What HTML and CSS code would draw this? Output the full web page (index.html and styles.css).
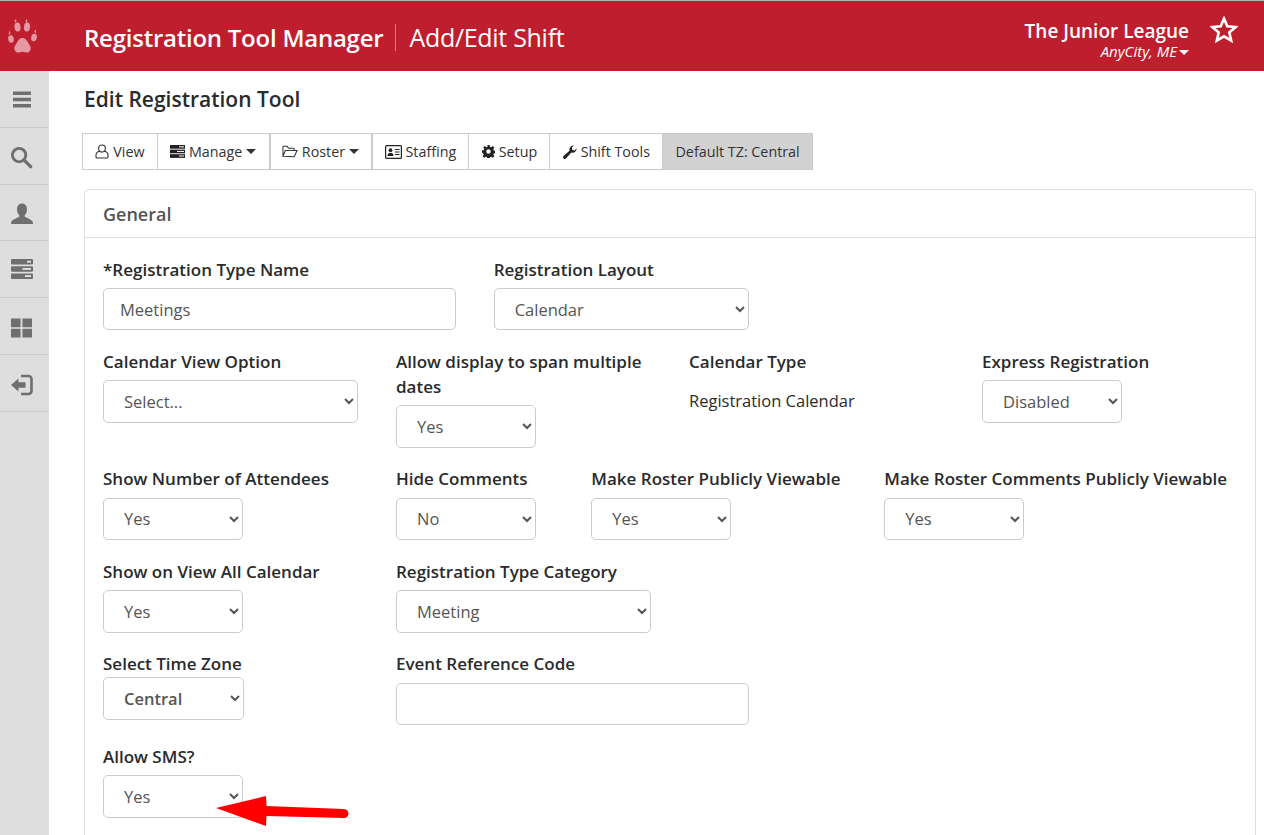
FILE: index.html
```html
<!DOCTYPE html>
<html lang="en">
<head>
<meta charset="utf-8">
<title>Add/Edit Shift</title>
<link rel="stylesheet" href="styles.css">
</head>
<body>
<header class="topbar">
  <div class="logo-cell">
    <svg class="paw" viewBox="0 0 30 36" width="30" height="36"><g fill="#e59aa3"><ellipse cx="3" cy="20" rx="2.800" ry="3.800" transform="rotate(-12 3 20)"/><ellipse cx="1.500" cy="14" rx=".8" ry="1.800"/><ellipse cx="9.500" cy="8" rx="3" ry="4.600" transform="rotate(-5 9.500 8)"/><ellipse cx="7.500" cy="2" rx=".8" ry="1.800"/><ellipse cx="19" cy="8" rx="3" ry="4.600" transform="rotate(5 19 8)"/><ellipse cx="18.500" cy="2" rx=".8" ry="1.800"/><ellipse cx="26" cy="18.500" rx="2.800" ry="3.800" transform="rotate(12 26 18.500)"/><ellipse cx="27.300" cy="12.500" rx=".8" ry="1.800"/><path d="M14.500 19c3 0 4.300 2.500 5.800 5 1.800 2.800 3 4.300 2.200 6.700-.8 2.400-3.200 3.200-5 2.700-1.200-.3-2-.7-3-.7s-1.800.4-3 .7c-1.800.5-4.200-.3-5-2.700-.8-2.400.4-3.900 2.200-6.700 1.500-2.500 2.800-5 5.800-5z"/></g></svg>
  </div>
  <div class="titles">
    <span class="app-title">Registration Tool Manager</span>
    <span class="page-title">Add/Edit Shift</span>
  </div>
  <div class="org">
    <div class="org-name">The Junior League</div>
    <div class="org-city">AnyCity, ME<span class="caret caret-white"></span></div>
  </div>
  <svg class="star" viewBox="0 0 28 27" width="28" height="27"><path d="M14 2.600l3.300 7.700 8.300.7-6.300 5.500 1.900 8.100-7.200-4.300-7.200 4.300 1.900-8.100-6.300-5.500 8.300-.7z" fill="none" stroke="#fff" stroke-width="2.600" stroke-linejoin="miter"/></svg>
</header>
<div class="shell">
  <nav class="sidebar">
    <a class="side-item side-top"><svg viewBox="0 0 20 18" width="20" height="19"><path fill="#6f6f6f" d="M1 1h18v3.500H1zM1 7.200h18v3.500H1zM1 13.500h18V17H1z"/></svg></a>
    <a class="side-item"><svg viewBox="0 0 24 24" width="23" height="23"><circle cx="9.500" cy="9.500" r="7" fill="none" stroke="#6f6f6f" stroke-width="3"/><path d="M14.500 14.500l7 7" stroke="#6f6f6f" stroke-width="3.600" stroke-linecap="round"/></svg></a>
    <a class="side-item"><svg viewBox="0 0 24 24" width="24" height="24"><path fill="#6f6f6f" d="M12 1.500c3.200 0 5 2.500 5 5.700 0 2.300-.8 4.300-2 5.700-.6.700-.4 1.800.4 2.200 1.800.9 5.100 2.500 6.600 3.600.6.500.9 1.600 1 3.300H1c.1-1.700.4-2.800 1-3.300 1.500-1.100 4.800-2.700 6.600-3.600.8-.4 1-1.500.4-2.200-1.200-1.400-2-3.400-2-5.700 0-3.200 1.800-5.700 5-5.700z"/></svg></a>
    <a class="side-item side-mid"><svg viewBox="0 0 24 22" width="24" height="22"><g fill="#6f6f6f"><rect x="1" y="1" width="22" height="5.500" rx="1.200"/><rect x="1" y="8.200" width="22" height="5.500" rx="1.200"/><rect x="1" y="15.400" width="22" height="5.500" rx="1.200"/></g><g fill="#e4e4e4"><rect x="17" y="2.800" width="4" height="1.800"/><rect x="12.500" y="10" width="8.500" height="1.800"/><rect x="15" y="17.200" width="6" height="1.800"/></g></svg></a>
    <a class="side-item"><svg viewBox="0 0 22 20" width="21" height="20"><path fill="#6f6f6f" d="M0 0h10v9.200H0zM12 0h10v9.200H12zM0 10.800h10V20H0zM12 10.800h10V20H12z"/></svg></a>
    <a class="side-item"><svg viewBox="0 0 24 22" width="24" height="22"><path fill="#6f6f6f" d="M1 11l7.500-6.500v3.700h7v5.600h-7v3.700z"/><path fill="none" stroke="#6f6f6f" stroke-width="2.600" d="M11 2h7.500a3 3 0 0 1 3 3v12a3 3 0 0 1-3 3H11"/></svg></a>
  </nav>
  <main class="content">
    <h1 class="page-heading">Edit Registration Tool</h1>
    <div class="toolbar">
      <a class="tool"><svg class="ti" viewBox="0 0 14 15" width="14" height="15"><path fill="none" stroke="#333" stroke-width="1.100" d="M7 1c2 0 3.400 1.500 3.400 3.500S9 8 7 8 3.600 6.500 3.600 4.500 5 1 7 1zM4.600 7.300C2.500 7.600 1 8.800 1 11.300V13c0 .6.500 1 1 1h10c.5 0 1-.4 1-1v-1.700c0-2.500-1.500-3.700-3.600-4"/></svg>View</a>
      <a class="tool"><svg class="ti" viewBox="0 0 15 13" width="15" height="13"><rect y="0" width="15" height="3.700" fill="#222"/><rect y="4.600" width="15" height="3.700" fill="#222"/><rect y="9.200" width="15" height="3.700" fill="#222"/><rect x="9" y="1.300" width="5" height="1" fill="#fff"/><rect x="7" y="5.900" width="7" height="1" fill="#fff"/><rect x="9" y="10.500" width="5" height="1" fill="#fff"/></svg>Manage<span class="caret"></span></a>
      <a class="tool tool-thick"><svg class="ti" viewBox="0 0 17 13" width="16" height="13"><path fill="none" stroke="#333" stroke-width="1.100" d="M1 11.500V2c0-.5.400-1 1-1h3.500l1.500 2h5c.5 0 1 .4 1 1v1.500M1 11.500 3.500 5.500H16l-3 6.500z"/></svg>Roster<span class="caret"></span></a>
      <a class="tool tool-thick"><svg class="ti" viewBox="0 0 17 14" width="17" height="14"><rect x=".6" y=".6" width="15.800" height="12.800" rx="1" fill="none" stroke="#222" stroke-width="1.200"/><circle cx="5.500" cy="5.200" r="1.900" fill="#222"/><path fill="#222" d="M2.500 11c0-2 1.300-3.200 3-3.200s3 1.200 3 3.200z"/><path stroke="#222" d="M10 4.500h4.500M10 7h4.500M10 9.500h4.500"/></svg>Staffing</a>
      <a class="tool"><svg class="ti" viewBox="0 0 14 14" width="13" height="13"><path fill="#222" fill-rule="evenodd" d="M5.800 0h2.400l.4 2 1.300.5L11.600 1.400l1.700 1.700-1.100 1.700.5 1.300 1.900.4v2.400l-1.900.4-.5 1.300 1.100 1.700-1.700 1.700-1.700-1.100-1.300.5-.4 1.800H5.800l-.4-1.800-1.300-.5-1.700 1.100-1.700-1.700 1.100-1.700-.5-1.300L0 8.400V6l1.900-.4.500-1.300-1.100-1.700L3 1.400l1.700 1.100L6 2zM7 4.800a2.400 2.400 0 1 0 0 4.800 2.400 2.400 0 0 0 0-4.800z" transform="translate(0 -.2)"/></svg>Setup</a>
      <a class="tool"><svg class="ti" viewBox="0 0 15 15" width="14" height="14"><path fill="#222" d="M14.500 3.500c.3 2.200-1.200 4.500-3.700 4.700-.7.100-1.300 0-1.900-.2l-5.500 6.200c-.8.900-2 1-2.800.2s-.7-2 .2-2.800l6.200-5.500c-.2-.6-.3-1.200-.2-1.900C7.300 1.700 9.500.2 11.700.5L9.500 2.700l.5 2.600 2.600.5z"/></svg>Shift Tools</a>
      <span class="tool tool-tz">Default TZ: Central</span>
    </div>
    <section class="card">
      <h2 class="card-header">General</h2>
      <div class="card-body">
        <div class="row">
          <div class="field span-4"><label class="lbl">*Registration Type Name</label><input class="ctl ctl-input" type="text" value="Meetings"></div>
          <div class="field span-4"><label class="lbl">Registration Layout</label><select class="ctl sel-wide"><option>Calendar</option></select></div>
        </div>
        <div class="row">
          <div class="field span-3"><label class="lbl">Calendar View Option</label><select class="ctl sel-wide"><option>Select...</option></select></div>
          <div class="field span-3"><label class="lbl">Allow display to span multiple dates</label><select class="ctl sel-small"><option>Yes</option></select></div>
          <div class="field span-3"><label class="lbl">Calendar Type</label><div class="static">Registration Calendar</div></div>
          <div class="field span-3"><label class="lbl">Express Registration</label><select class="ctl sel-small"><option>Disabled</option></select></div>
        </div>
        <div class="row">
          <div class="field span-3"><label class="lbl">Show Number of Attendees</label><select class="ctl sel-small"><option>Yes</option></select></div>
          <div class="field span-2"><label class="lbl">Hide Comments</label><select class="ctl sel-small"><option>No</option></select></div>
          <div class="field span-3"><label class="lbl">Make Roster Publicly Viewable</label><select class="ctl sel-small"><option>Yes</option></select></div>
          <div class="field span-4"><label class="lbl">Make Roster Comments Publicly Viewable</label><select class="ctl sel-small"><option>Yes</option></select></div>
        </div>
        <div class="row">
          <div class="field span-3"><label class="lbl">Show on View All Calendar</label><select class="ctl sel-small"><option>Yes</option></select></div>
          <div class="field span-4"><label class="lbl">Registration Type Category</label><select class="ctl sel-wide"><option>Meeting</option></select></div>
        </div>
        <div class="row">
          <div class="field span-3"><label class="lbl lbl-tight">Select Time Zone</label><select class="ctl sel-small sel-strong"><option>Central</option></select></div>
          <div class="field span-4"><label class="lbl">Event Reference Code</label><input class="ctl ctl-input" type="text"></div>
        </div>
        <div class="row">
          <div class="field span-3"><label class="lbl">Allow SMS?</label><select class="ctl sel-small"><option>Yes</option></select></div>
        </div>
      </div>
    </section>
  </main>
</div>
<svg class="callout" viewBox="0 0 136 34" width="136" height="34"><path fill="#f00" d="M0 13 50 1l.5 10 77 3c3.500.2 5 2.300 5 4.500s-1.500 4.600-5 4.500l-77-2-.5 10z"/></svg>
</body>
</html>
```
FILE: styles.css
```css
* { box-sizing: border-box; }
html, body { margin: 0; height: 835px; overflow: hidden; }
body {
  position: relative;
  font-family: "Open Sans", "Noto Sans", sans-serif;
  font-size: 16px;
  color: #292b2c;
  background: #fff;
}
.topbar {
  height: 71px;
  padding-top: 2px;
  background: #be1e2d;
  border-top: 1px solid #b5b5b5;
  display: flex;
  align-items: center;
  color: #fff;
}
.logo-cell { width: 84px; padding-left: 8px; display: flex; align-items: center; }
.titles { flex: 1; display: flex; align-items: center; }
.app-title { font-size: 24px; font-weight: 600; letter-spacing: -0.24px; padding-right: 12px; border-right: 1px solid #d9808a; line-height: 27px; }
.page-title { font-size: 25px; font-weight: 400; letter-spacing: -0.3px; padding-left: 13px; }
.org { text-align: right; padding: 6px 21px 0 0; }
.org-name { font-size: 19px; font-weight: 600; line-height: 22px; }
.org-city { font-size: 15px; font-style: italic; line-height: 19px; }
.star { margin-right: 26px; margin-bottom: 16px; }
.caret { display: inline-block; margin-left: 4px; border-top: 5px solid #333; border-left: 5px solid transparent; border-right: 5px solid transparent; vertical-align: 2px; }
.caret-white { border-top-color: #fff; margin-left: 2px; }
.shell { display: flex; height: 764px; overflow: hidden; }
.sidebar { width: 49px; background: #dedede; flex: none; }
.side-item { height: 56.8px; padding: 4px 6px 0 0; display: flex; align-items: center; justify-content: center; border-bottom: 1px solid #cbcbcb; }
.side-top { padding-top: 2px; }
.side-mid { padding-top: 0; }
.content { flex: 1; padding: 0 8px 0 35px; }
.page-heading { margin: 14px 0 19px; font-size: 21px; line-height: 29px; font-weight: 600; color: #292b2c; }
.toolbar { display: inline-flex; margin-left: -2px; height: 37px; border: 1px solid #ccc; font-size: 14.300px; color: #333; }
.tool { display: flex; align-items: center; padding: 0 12.250px; border-left: 1px solid #ccc; white-space: nowrap; }
.tool:first-child { border-left: 0; }
.tool-thick { border-left-width: 2px; padding-left: 11.250px; }
.ti { margin-right: 4px; flex: none; }
.tool-tz { background: #d2d2d2; }
.card { margin-top: 19px; border: 1px solid #ddd; border-radius: 5px; min-height: 800px; }
.card-header { margin: 0; height: 48px; padding: 0 18px; display: flex; align-items: center; font-size: 18px; font-weight: 600; color: #555; border-bottom: 1px solid #ddd; }
.card-body { padding: 19.500px 0 0 18px; }
.row { display: grid; grid-template-columns: repeat(12, 1fr); margin: 0 -20px 19.750px 0; }
.span-2 { grid-column: span 2; }
.span-3 { grid-column: span 3; }
.span-4 { grid-column: span 4; }
.lbl { display: block; font-size: 17px; line-height: 24.750px; font-weight: 600; margin-bottom: 5.500px; padding-right: 37px; }
.lbl-tight { margin-bottom: 0; }
.static { font-size: 16.500px; line-height: 42px; margin-top: 2px; }
.ctl { display: block; height: 42.500px; font-family: inherit; font-size: 16.500px; color: #555; background: #fff; border: 1px solid #ccc; border-radius: 5px; }
.ctl-input { width: 353px; padding: 0 16px; }
select.ctl { padding: 0 0 0 16px; }
.sel-wide { width: 255px; }
.sel-small { width: 140px; }
.sel-strong { width: 141px; font-weight: 600; }
.callout { position: absolute; left: 216px; top: 795px; }
```
